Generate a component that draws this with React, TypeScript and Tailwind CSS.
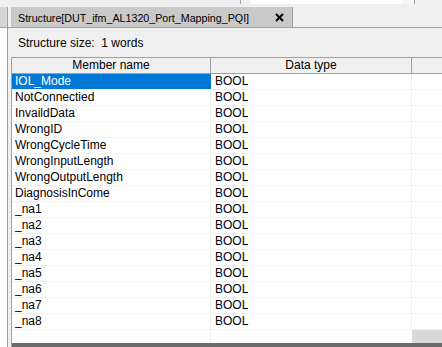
const members = [
  'IOL_Mode',
  'NotConnectied',
  'InvaildData',
  'WrongID',
  'WrongCycleTime',
  'WrongInputLength',
  'WrongOutputLength',
  'DiagnosisInCome',
  '_na1',
  '_na2',
  '_na3',
  '_na4',
  '_na5',
  '_na6',
  '_na7',
  '_na8',
];

export default function App() {
  const selected = 0;

  return (
    <div className="w-[442px] h-[347px] overflow-hidden flex flex-col bg-[#f0f0f0] text-black font-['Liberation_Sans',Arial,sans-serif] text-[12px] leading-[16px]">
      {/* edge of the window above */}
      <div className="h-[7px] flex items-start">
        <div className="w-[240px]" />
        <div className="w-px h-[4px] bg-[#a0a0a0]" />
        <div className="w-[10px]" />
        <div className="w-[150px] h-[4px] bg-white" />
        <div className="w-[13px] h-[4px] bg-[#f7f7f7]" />
        <div className="w-px h-[4px] bg-[#a0a0a0]" />
      </div>

      {/* tab bar */}
      <div className="h-[21px] flex border-b border-[#a0a0a0]">
        <div className="w-[8px] bg-[#d6d6d6] border-r border-[#a0a0a0]" />
        <div className="w-[3px]" />
        <div className="w-[282px] bg-[#c9c9c9] border-r border-[#a0a0a0] flex items-center pl-[7px] pr-[7px]">
          <span className="flex-1 text-[10.7px] whitespace-nowrap pt-px">
            Structure[DUT_ifm_AL1320_Port_Mapping_PQI]
          </span>
          <svg width="9" height="9" viewBox="0 0 9 9" className="mr-[1px]">
            <path d="M1 1 L8 8 M8 1 L1 8" stroke="#000" strokeWidth="2" />
          </svg>
        </div>
      </div>

      <div className="flex-1 flex min-h-0">
        <div className="w-[8px] bg-white border-r border-[#a0a0a0]" />
        <div className="flex-1 flex flex-col min-w-0 pl-[3px]">
          <div className="h-[29px] flex items-center pl-[7px] pt-[1px] whitespace-nowrap">
            Structure size:&nbsp; 1 words
          </div>

          {/* table */}
          <div className="flex-1 flex flex-col w-[440px] border-l border-[#a0a0a0] bg-white">
            <div className="flex h-[17px] bg-[#f0f0f0] border-t border-b border-[#a0a0a0]">
              <div className="w-[199px] border-r border-[#a0a0a0] text-center leading-[15px]">Member name</div>
              <div className="w-[201px] border-r border-[#a0a0a0] text-center leading-[15px]">Data type</div>
              <div className="flex-1" />
            </div>

            {members.map((name, i) => (
              <div key={name} className="flex h-[16px] border-b border-[#f0f0f0]">
                <div
                  className={`w-[199px] pl-[3px] leading-[15px] whitespace-nowrap border-r ${
                    i === selected ? 'bg-[#0078d7] text-white border-[#0078d7]' : 'border-[#f0f0f0]'
                  }`}
                >
                  {name}
                </div>
                <div className="w-[201px] pl-[4px] leading-[15px] border-r border-[#f0f0f0]">BOOL</div>
                <div className="flex-1" />
              </div>
            ))}

            <div className="flex flex-1">
              <div className="w-[199px] border-r border-[#f0f0f0]" />
              <div className="w-[201px]" />
              <div className="flex-1 bg-[#d9d9d9]" />
            </div>
            <div className="h-[4px] bg-[#6b6b6b]" />
          </div>
        </div>
      </div>
    </div>
  );
}
